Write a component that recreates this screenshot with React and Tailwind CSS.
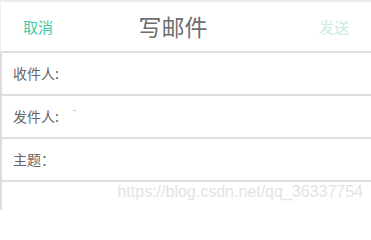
export default function App() {
  const rows = [
    { label: "收件人:", mark: false },
    { label: "发件人:", mark: true },
    { label: "主题：", mark: false },
  ];

  return (
    <div
      className="w-[371px] h-[210px] bg-white overflow-hidden flex flex-col border-t-2 border-[#ececec]"
      style={{ fontFamily: '"Noto Sans CJK SC", "Liberation Sans", sans-serif' }}
    >
      {/* Header */}
      <div className="h-[51px] shrink-0 flex items-center justify-between px-[22px] border-b-2 border-[#dedede] border-l border-l-[#efefef]">
        <button type="button" className="text-[15px] text-[#45c9a4] leading-none">
          取消
        </button>
        <h1 className="text-[23px] text-[#6e6e6e] leading-none mr-[26px]">写邮件</h1>
        <button type="button" className="text-[15px] text-[#c5ede0] leading-none">
          发送
        </button>
      </div>

      {/* Fields */}
      <div className="flex-1 flex flex-col border-l-2 border-[#dcdcdc]">
        {rows.map((row) => (
          <div
            key={row.label}
            className="h-[43px] shrink-0 flex items-center pl-[11px] border-b-2 border-[#dedede]"
          >
            <span className="text-[14px] text-[#666666]">{row.label}</span>
            {row.mark && <span className="ml-[14px] mb-[12px] w-[3px] h-px bg-[#cccccc]" />}
          </div>
        ))}
        <div className="flex-1 flex items-start justify-end pr-[8px] pt-[1px]">
          <span
            className="text-[16px] leading-[18px] text-[#e3e3e3]"
            style={{ fontFamily: '"Liberation Sans", sans-serif' }}
          >
            https://blog.csdn.net/qq_36337754
          </span>
        </div>
      </div>
    </div>
  );
}
